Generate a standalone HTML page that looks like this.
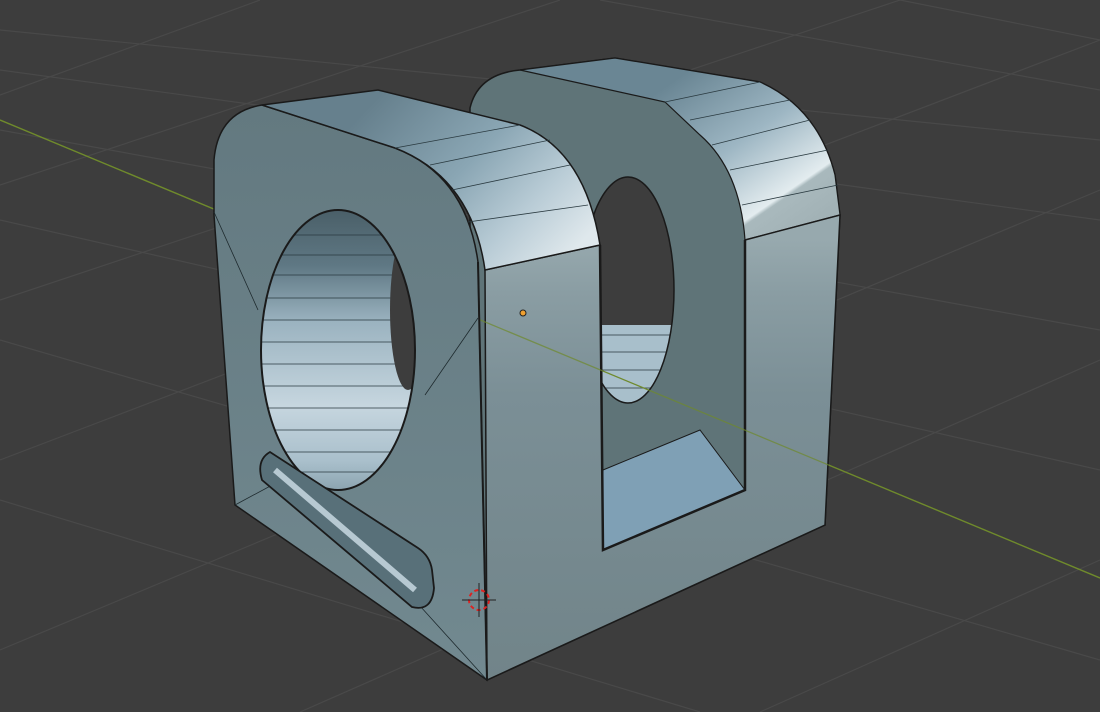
<!DOCTYPE html>
<html><head><meta charset="utf-8"><style>
html,body{margin:0;padding:0;background:#3d3d3d;overflow:hidden}
svg{display:block}
</style></head><body>
<svg width="1100" height="712" viewBox="0 0 1100 712" xmlns="http://www.w3.org/2000/svg">
<defs>
<linearGradient id="ltop" x1="380" y1="95" x2="560" y2="265" gradientUnits="userSpaceOnUse">
<stop offset="0" stop-color="#66808d"/><stop offset="0.45" stop-color="#8aa6b4"/><stop offset="0.75" stop-color="#b9ccd6"/><stop offset="1" stop-color="#dfe8ec"/></linearGradient>
<linearGradient id="rtop" x1="690" y1="70" x2="800" y2="230" gradientUnits="userSpaceOnUse">
<stop offset="0" stop-color="#6a8694"/><stop offset="0.45" stop-color="#9db6c3"/><stop offset="0.8" stop-color="#e3ecef"/><stop offset="0.82" stop-color="#a9b9bd"/><stop offset="1" stop-color="#a2b2b6"/></linearGradient>
<linearGradient id="front" x1="0" y1="240" x2="0" y2="680" gradientUnits="userSpaceOnUse">
<stop offset="0" stop-color="#97a9ae"/><stop offset="0.12" stop-color="#8a9da3"/><stop offset="0.35" stop-color="#7b8f96"/><stop offset="1" stop-color="#718489"/></linearGradient>
<linearGradient id="lface" x1="0" y1="110" x2="0" y2="680" gradientUnits="userSpaceOnUse">
<stop offset="0" stop-color="#637980"/><stop offset="1" stop-color="#728990"/></linearGradient>
<linearGradient id="hole" x1="0" y1="210" x2="0" y2="490" gradientUnits="userSpaceOnUse">
<stop offset="0" stop-color="#4a5f68"/><stop offset="0.2" stop-color="#5f7884"/><stop offset="0.4" stop-color="#9bb3c0"/><stop offset="0.7" stop-color="#c6d6df"/><stop offset="0.9" stop-color="#a9bfcb"/><stop offset="1" stop-color="#8ca4b0"/></linearGradient>
<clipPath id="hc"><ellipse cx="338" cy="350" rx="77" ry="140"/></clipPath>
<clipPath id="rc"><ellipse cx="628" cy="290" rx="46" ry="113"/></clipPath>
</defs>
<rect width="1100" height="712" fill="#3d3d3d"/>
<g stroke="#494949" stroke-width="1.2" fill="none">
<path d="M0,95 L260,0"/><path d="M0,185 L560,0"/><path d="M0,300 L900,0"/><path d="M0,460 L1100,40"/><path d="M0,650 L1100,190"/><path d="M300,712 L1100,360"/><path d="M760,712 L1100,560"/>
<path d="M0,30 L1100,140"/><path d="M0,70 L1100,220"/><path d="M0,130 L1100,330"/><path d="M0,220 L1100,470"/><path d="M0,340 L1100,660"/><path d="M0,500 L700,712"/><path d="M900,0 L1100,40"/><path d="M600,0 L1100,90"/>
</g>
<path d="M0,120 L1100,578" stroke="#6f8a2c" stroke-width="1.3"/>
<!-- right block -->
<path d="M470,108 Q478,74 520,70 L615,58 L760,82 Q818,108 835,175 L840,215 L825,525 L487,680 L470,600 Z" fill="#5f7478" stroke="#1a1a1a" stroke-width="1.5"/>
<path d="M520,70 L615,58 L760,82 Q818,108 835,175 L840,215 L745,240 Q740,170 700,135 L665,102 Z" fill="url(#rtop)" stroke="#1a1a1a" stroke-width="1.2"/>
<g stroke="#2a3a40" stroke-width="0.8" fill="none"><path d="M665,102 L760,82"/><path d="M690,120 L790,100"/><path d="M712,145 L810,120"/><path d="M730,170 L828,150"/><path d="M742,205 L838,185"/></g>
<ellipse cx="628" cy="290" rx="46" ry="113" fill="#3d3d3d"/>
<g clip-path="url(#rc)"><rect x="580" y="325" width="100" height="90" fill="#a8bfcb"/><path d="M580,335 L680,335 M580,352 L680,352 M580,370 L680,370 M580,388 L680,388" stroke="#2a3a40" stroke-width="0.8"/><path d="M0,120 L1100,578" stroke="#6f8a2c"/></g>
<ellipse cx="628" cy="290" rx="46" ry="113" fill="none" stroke="#1a1a1a" stroke-width="1.5"/>
<!-- floor -->
<path d="M603,470 L700,430 L745,490 L603,550 Z" fill="#7fa0b5" stroke="#1a1a1a"/>
<!-- front face -->
<path d="M485,270 L600,245 L603,550 L745,490 L745,240 L840,215 L825,525 L487,680 Z" fill="url(#front)" stroke="#1a1a1a" stroke-width="1.5"/>
<path d="M745,240 L745,490 L603,550 L600,245" fill="none" stroke="#1a1a1a" stroke-width="2.5"/>
<path d="M0,120 L1100,578" stroke="#6f8a2c" stroke-width="1.3" opacity="0.7"/>
<!-- left face -->
<path d="M214,215 L214,160 Q218,112 262,105 L395,148 Q466,175 478,262 L487,680 L235,505 Z" fill="url(#lface)" stroke="#1a1a1a" stroke-width="1.5"/>
<path d="M214,212 L258,310 M478,318 L425,395 M235,505 L300,470 M487,680 L420,606" stroke="#1e2a2e" stroke-width="0.8" fill="none"/>
<ellipse cx="338" cy="350" rx="77" ry="140" fill="url(#hole)"/>
<g clip-path="url(#hc)" stroke="#2a3a40" stroke-width="0.8">
<path d="M260,235 L420,235 M260,255 L420,255 M260,275 L420,275 M260,298 L420,298 M260,320 L420,320 M260,342 L420,342 M260,364 L420,364 M260,386 L420,386 M260,408 L420,408 M260,430 L420,430 M260,452 L420,452 M260,472 L420,472"/>
<ellipse cx="408" cy="310" rx="18" ry="80" fill="#3d3d3d" stroke="none"/>
</g>
<ellipse cx="338" cy="350" rx="77" ry="140" fill="none" stroke="#1a1a1a" stroke-width="2"/>
<!-- slot -->
<path d="M270,452 Q256,460 262,480 L412,607 Q432,612 434,588 L432,570 Q430,556 418,548 Z" fill="#587079" stroke="#1a1a1a" stroke-width="1.8"/>
<path d="M275,470 L415,590" stroke="#b7c9d2" stroke-width="6"/>
<!-- left top -->
<path d="M262,105 L378,90 L520,125 Q585,150 600,245 L485,270 Q472,178 395,148 Z" fill="url(#ltop)" stroke="#1a1a1a" stroke-width="1.5"/>
<g stroke="#2a3a40" stroke-width="0.8" fill="none"><path d="M395,148 L520,125"/><path d="M430,165 L550,140"/><path d="M452,190 L570,165"/><path d="M468,222 L588,205"/></g>
<path d="M478,262 L487,680" stroke="#1a1a1a" stroke-width="2"/>
<circle cx="523" cy="313" r="3" fill="#f0a030" stroke="#222"/>
<circle cx="479" cy="600" r="10" fill="none" stroke="#d22" stroke-width="2" stroke-dasharray="4 3"/>
<path d="M462,600 L496,600 M479,583 L479,617" stroke="#222" stroke-width="1"/>
</svg>
</body></html>
